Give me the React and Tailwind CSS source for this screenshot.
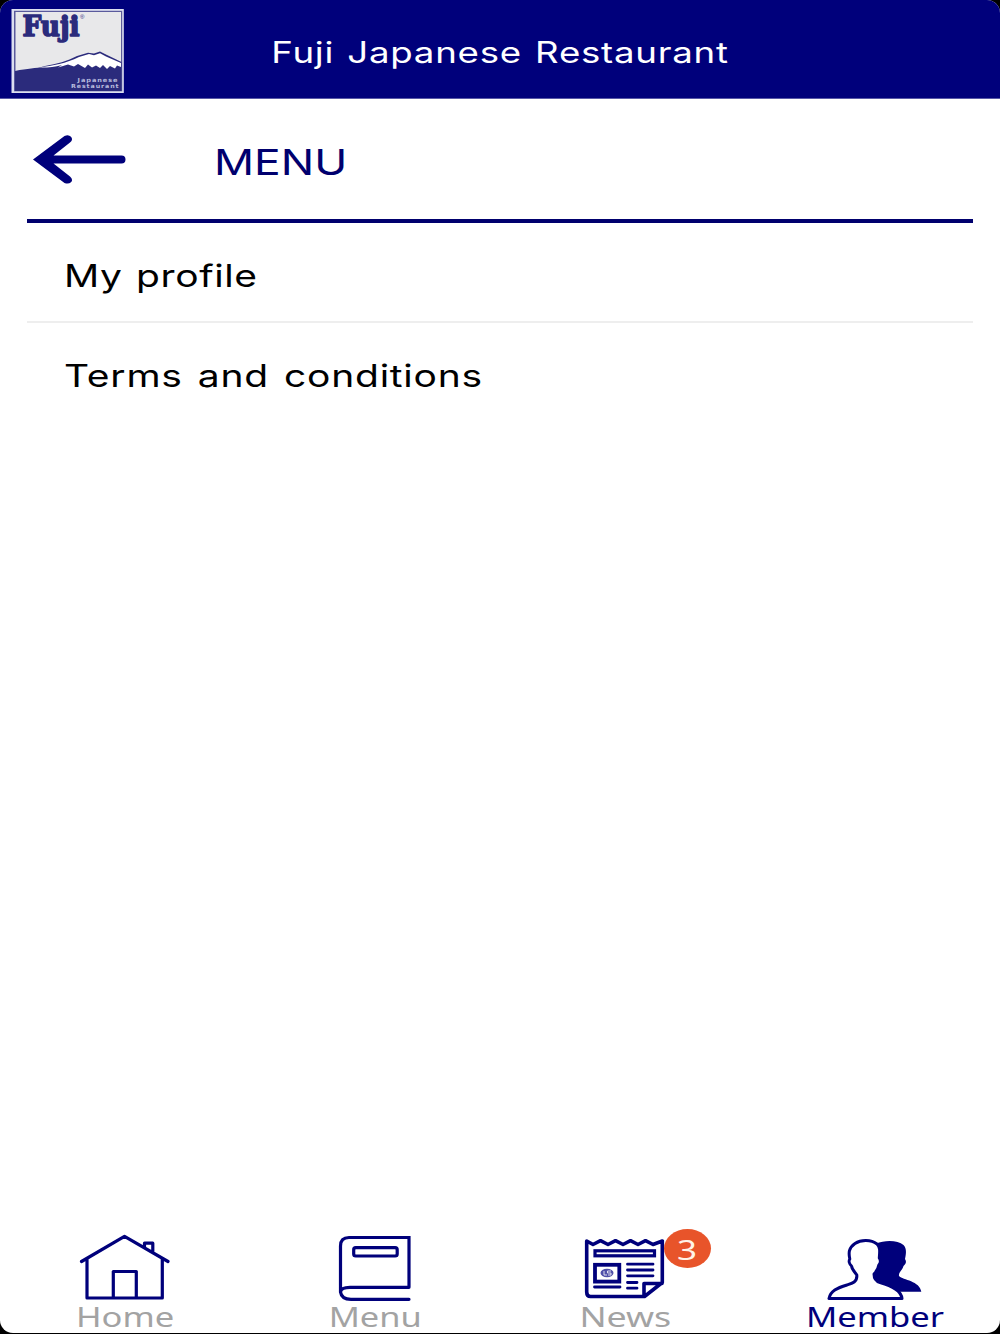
const stroke = {
  fill: 'none',
  stroke: '#00007b',
  strokeWidth: 3.2,
  strokeLinecap: 'round',
  strokeLinejoin: 'round',
};

function Logo() {
  return (
    <svg className="block h-[86px] w-[114px]" viewBox="11 8 114 86" role="img" aria-label="Fuji Japanese Restaurant">
      <rect x="11.5" y="9" width="112.3" height="84" fill="#dcdff0" />
      <rect x="14" y="10.8" width="108.2" height="80.5" fill="#5a5a9c" />
      <rect x="15.5" y="12" width="105.5" height="59" fill="#e8e8ea" />
      <path d="M15 71 C28 68 35 69 45 66 C57 64 67 61 77 56 L88 52.8 L94 53.5 L100 51.5 L107 55 L121.5 62 V91 H15Z" fill="#2b2b7c" />
      <path d="M39 67.5 C53 65.5 66 63.5 79 57 L89 54 L94 55.2 L100 53.2 L106 56.5 L121 63 V67 L117 65.5 L115 68.5 L110 66 L107 69 L103 65 L100 68 L96 65.5 L92 67.5 L88 64.5 L85 68 L78 64 L74 66.5 L68 64.5 L58 67.5 L62 65 C54 67 47 67.8 39 67.5Z" fill="#fff" />
      <text x="22.5" y="36.3" textLength="57" lengthAdjust="spacingAndGlyphs" fill="#2b2b7c" stroke="#2b2b7c" strokeWidth="1.6" strokeLinejoin="round" className="font-['DejaVu_Serif'] text-[27px] font-bold">Fuji</text>
      <text x="80" y="18.5" fill="#2b2b7c" className="font-['Liberation_Sans'] text-[6px]">®</text>
      <text x="77.5" y="82" textLength="41" lengthAdjust="spacingAndGlyphs" fill="#b9bbdd" className="font-['DejaVu_Sans'] text-[5.6px] font-bold tracking-[0.8px]">Japanese</text>
      <text x="71" y="88.3" textLength="48.5" lengthAdjust="spacingAndGlyphs" fill="#b9bbdd" className="font-['DejaVu_Sans'] text-[5.6px] font-bold tracking-[0.8px]">Restaurant</text>
    </svg>
  );
}

function BackArrow() {
  return (
    <svg className="block h-[50px] w-[94px]" viewBox="32 134 94 50">
      <path d="M33 159.5 L64.5 136 Q68.5 134 71 136.8 Q73.5 140 70 142.5 L53.5 155.5 H121.5 A4 4 0 0 1 121.5 163.5 H53.5 L70 176.5 Q73.5 179.5 71 182.2 Q68.5 184.5 64.5 183Z" fill="#00007b" />
    </svg>
  );
}

function HomeIcon() {
  return (
    <svg className="block h-[72px] w-[96px]" viewBox="77 1230 96 72">
      <path d="M81.5 1261.5 L124.5 1236.3 L168 1261.5 M87 1259 V1298 H162.3 V1259 M113.3 1298 V1271.5 H136.3 V1298 M144.5 1247 V1243.2 H152.8 V1252" {...stroke} />
    </svg>
  );
}

function BookIcon() {
  return (
    <svg className="block h-[72px] w-[96px]" viewBox="327 1230 96 72">
      <path d="M409 1287.3 V1237.5 H349 Q340.5 1237.5 340.5 1246 V1292 Q341 1287.3 350 1287.3 H409 M340.5 1292 Q341.5 1299.3 351 1299.3 H409" {...stroke} strokeLinejoin="miter" />
      <rect x="353.7" y="1247.7" width="43.5" height="8.3" rx="2" {...stroke} />
    </svg>
  );
}

function NewsIcon() {
  return (
    <svg className="block h-[72px] w-[96px]" viewBox="577 1230 96 72">
      <path d="M586.7 1241 L593 1244.5 L600.5 1240.7 L608 1244.5 L615.5 1240.7 L623 1244.5 L630.5 1240.7 L638 1244.5 L645.5 1240.7 L653 1244.5 L662.3 1241 V1282.5 L644.5 1296.5 H590.5 Q586.7 1296.5 586.7 1292Z M644 1296 V1283.5 H662" {...stroke} strokeWidth="3.6" />
      <rect x="595" y="1250.8" width="59.5" height="5" {...stroke} strokeLinejoin="miter" />
      <rect x="595" y="1264.8" width="24.3" height="16.8" {...stroke} strokeLinejoin="miter" strokeWidth="3.8" />
      <ellipse cx="607" cy="1273" rx="6.5" ry="4.2" fill="#5050a8" />
      <path d="M604 1271 V1275 H607 M611 1271 H607.5 V1273 H611 V1275 H608" fill="none" stroke="#fff" strokeWidth=".8" />
      <path d="M627.5 1264.2 H653 M627.5 1270 H653 M627.5 1275.8 H653 M627.5 1282.5 H637 M594.5 1287 H620 M627.5 1288.2 H637" {...stroke} strokeWidth="2.8" />
    </svg>
  );
}

function MemberIcon() {
  return (
    <svg className="block h-[72px] w-[96px]" viewBox="827 1230 96 72">
      <path d="M876 1243.5 C885 1239.8 898 1240 903.5 1245 C907.5 1249 905.5 1256 905 1259 C907 1262 905.5 1264 903.5 1266 C902 1271 898.5 1272 899 1276 C903 1280 920 1281 921.3 1291.8 H880 L872 1278 V1250Z" fill="#00007b" />
      <path d="M829 1298.5 H902 C901 1290 889 1285 880 1282.5 C875 1281 874 1278 874 1274 C877 1271 878.5 1268 878.8 1265 C880.8 1263 880.5 1260 879.3 1258 C880 1250 880 1247 877 1244 C871 1239.5 861 1239.5 855 1243.5 C848.5 1248 848.5 1253 849.8 1259 C848.5 1261 849.3 1264 851.5 1266 C852 1270 855 1272 856.8 1275 C857.5 1282 852 1283.5 847 1285 C837 1288 830.5 1291 829 1298.5Z" fill="#fff" stroke="#00007b" strokeWidth="3" strokeLinejoin="round" />
    </svg>
  );
}

function Tab({ icon, label, labelClass, badge }) {
  return (
    <button className="flex flex-col items-center">
      <span className="relative block">
        {icon}
        {badge && (
          <span className="absolute -top-[1px] left-[87px] flex h-[39px] w-[47px] items-center justify-center rounded-[50%] bg-[#e8542a] text-[28px] leading-none text-[#fff3e8]">
            <span className="inline-block scale-x-[1.25] pt-[1px]">{badge}</span>
          </span>
        )}
      </span>
      <span className={`mt-px block h-[28px] whitespace-nowrap text-[27.5px] leading-[28px] ${labelClass}`}>{label}</span>
    </button>
  );
}

export default function App() {
  return (
    <div className="h-[1334px] w-[1000px] bg-black font-['Inter',sans-serif]">
      <div className="flex h-[1333px] flex-col rounded-[13px] bg-white">
        <header className="grid h-[99px] shrink-0 grid-cols-[125px_1fr_125px] items-center rounded-t-[13px] border-b border-[#5858a8] bg-[#00007b]">
          <div className="pt-[3px] pl-[11px]">
            <Logo />
          </div>
          <h1 className="pt-[7px] text-center text-[29.3px] leading-[36px] text-white">
            <span className="inline-block scale-x-[1.25] whitespace-nowrap tracking-[0.6px] [word-spacing:1.8px]">Fuji Japanese Restaurant</span>
          </h1>
        </header>

        <main className="mx-[27px] flex-1">
          <div className="flex h-[124px] items-start border-b-4 border-[#00006e] pt-[35px] pl-[5px]">
            <BackArrow />
            <h2 className="pt-[7px] pl-[88px] text-[35.5px] leading-[44px] text-[#00006e]">
              <span className="inline-block origin-left scale-x-[1.25]">MENU</span>
            </h2>
          </div>
          <ul className="text-[31.2px] leading-[40px] text-black">
            <li className="h-[100px] border-b-2 border-[#eeeeee] pt-[33px] pl-[37px]">
              <span className="inline-block origin-left scale-x-[1.25] tracking-[0.5px] [word-spacing:1.5px]">My profile</span>
            </li>
            <li className="h-[100px] pt-[33px] pl-[37px]">
              <span className="inline-block origin-left scale-x-[1.25] tracking-[0.6px] [word-spacing:2.8px]">Terms and conditions</span>
            </li>
          </ul>
        </main>

        <nav className="grid h-[103px] shrink-0 grid-cols-4 font-['Noto_Sans',sans-serif]">
          <Tab icon={<HomeIcon />} label="Home" labelClass="scale-x-[1.255] text-[#a3a3a3]" />
          <Tab icon={<BookIcon />} label="Menu" labelClass="scale-x-[1.25] text-[#a3a3a3]" />
          <Tab icon={<NewsIcon />} label="News" labelClass="scale-x-[1.3] text-[#a3a3a3]" badge="3" />
          <Tab icon={<MemberIcon />} label="Member" labelClass="scale-x-[1.255] text-[#00007b]" />
        </nav>
      </div>
    </div>
  );
}
